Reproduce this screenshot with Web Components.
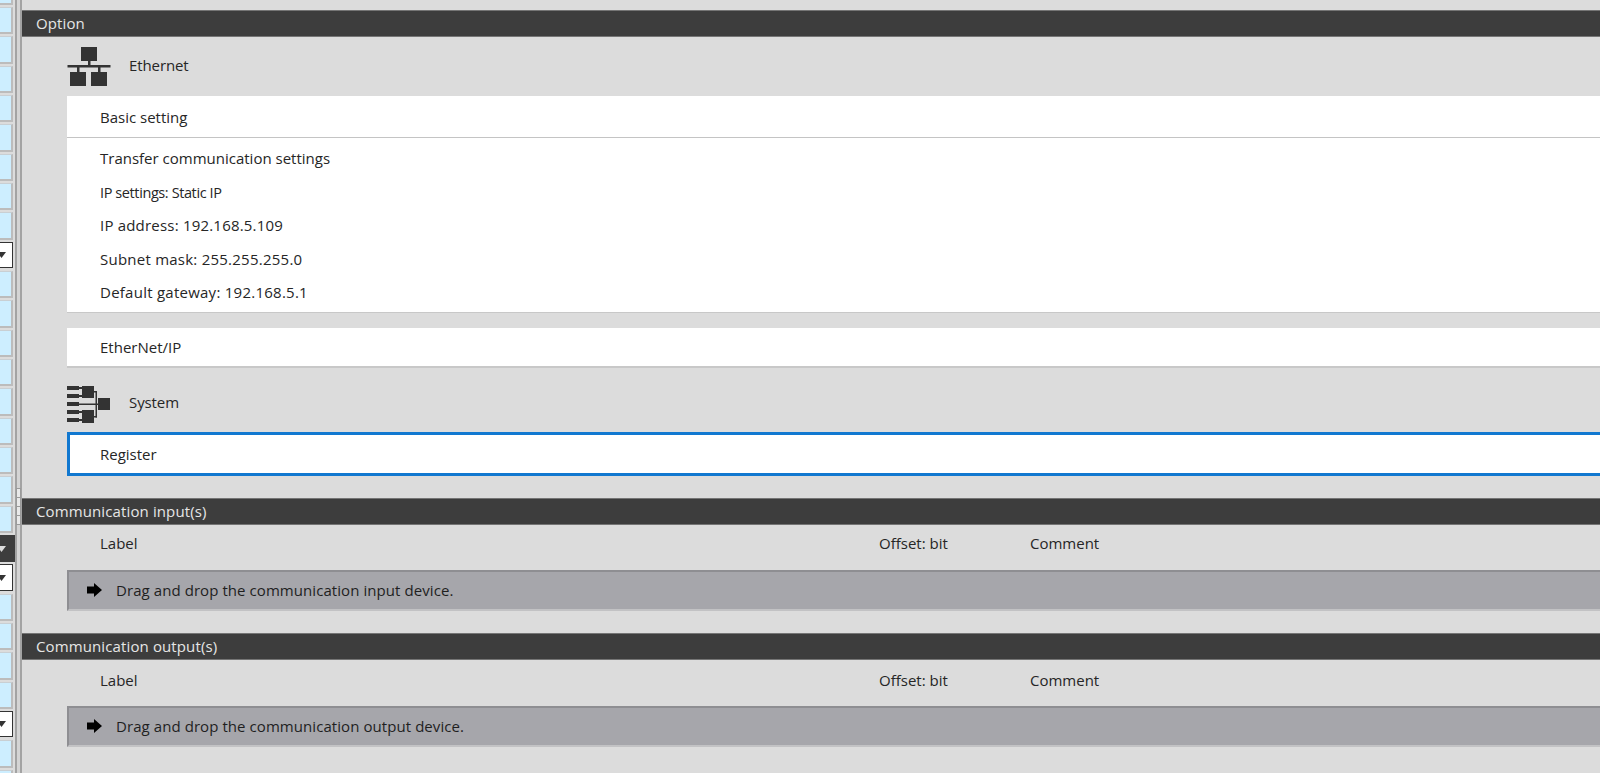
<!DOCTYPE html>
<html>
<head>
<meta charset="utf-8">
<title>Option</title>
<style>
  html, body { margin: 0; height: 100%; overflow: hidden; background: #dcdcdc; }
  body {
    display: flex;
    font: 15px "Open Sans", "Noto Sans", sans-serif;
    color: #262626;
  }
  .grow { flex: 1; min-width: 0; padding-top: 10px; }
</style>
</head>
<body>
<side-strip></side-strip>
<pane-splitter></pane-splitter>
<div class="grow">
  <section-bar>Option</section-bar>

  <group-head>
    <svg slot="icon" width="44" height="40" viewBox="0 0 44 40" fill="#333">
      <rect x="14" y="0" width="16" height="14"/>
      <rect x="21" y="14" width="2.5" height="5"/>
      <rect x="0.5" y="18" width="43" height="2.5"/>
      <rect x="10" y="20" width="2.5" height="5"/>
      <rect x="31" y="20" width="2.5" height="5"/>
      <rect x="3" y="25" width="16" height="14"/>
      <rect x="24" y="25" width="16" height="14"/>
    </svg>
    Ethernet
  </group-head>
  <white-row>Basic setting</white-row>
  <detail-card>
    <div>Transfer communication settings</div>
    <div style="font-size:14.5px;letter-spacing:-.4px">IP settings: Static IP</div>
    <div style="letter-spacing:.2px">IP address: 192.168.5.109</div>
    <div style="letter-spacing:.24px">Subnet mask: 255.255.255.0</div>
    <div style="letter-spacing:.25px">Default gateway: 192.168.5.1</div>
  </detail-card>
  <white-row gap>EtherNet/IP</white-row>

  <group-head tall>
    <svg slot="icon" width="44" height="38" viewBox="0 0 44 38" fill="#333">
      <rect x="0" y="1" width="12" height="4"/>
      <rect x="0" y="9" width="12" height="4"/>
      <rect x="0" y="17" width="12" height="4"/>
      <rect x="0" y="25" width="12" height="4"/>
      <rect x="0" y="33" width="12" height="4"/>
      <rect x="12" y="2" width="3" height="2"/>
      <rect x="12" y="10" width="3" height="2"/>
      <rect x="12" y="26" width="3" height="2"/>
      <rect x="12" y="34" width="3" height="2"/>
      <rect x="15" y="1" width="12" height="12"/>
      <rect x="15" y="25" width="12" height="13"/>
      <rect x="31" y="13" width="12" height="12"/>
      <rect x="12" y="18.5" width="19" height="1.5"/>
      <rect x="27" y="6" width="3" height="1.5"/>
      <rect x="27" y="31" width="3" height="1.5"/>
      <rect x="28.5" y="6" width="1.5" height="26.5"/>
    </svg>
    System
  </group-head>
  <white-row selected>Register</white-row>

  <section-bar spaced>Communication input(s)</section-bar>
  <col-head></col-head>
  <drop-zone>Drag and drop the communication input device.</drop-zone>

  <section-bar spaced>Communication output(s)</section-bar>
  <col-head tall></col-head>
  <drop-zone>Drag and drop the communication output device.</drop-zone>
</div>

<script>
  // left list, cut off by the window edge: only the right end of each cell shows
  class SideStrip extends HTMLElement {
    constructor() {
      super();
      const shadowRoot = this.attachShadow({ mode: 'open' });
      const kinds = {
        8: 'drop', 18: 'dark', 19: 'drop', 24: 'drop'
      };
      let cells = '';
      for (let i = -1; i < 27; i++) {
        const kind = kinds[i] || '';
        const caret = kind ? '<svg width="9" height="6" viewBox="0 0 9 6"><path d="M0 0h9L4.5 6z" fill="' + (kind == 'dark' ? '#ddd' : '#333') + '"/></svg>' : '';
        cells += '<div class="cell ' + kind + '">' + caret + '</div>';
      }
      shadowRoot.innerHTML = `
        <style>
          :host { display: block; width: 15px; flex: none; overflow: hidden; height: 773px; }
          .list { margin-top: -22.3px; }
          .cell {
            box-sizing: border-box;
            width: 13px;
            height: 27.33px;
            margin-bottom: 2px;
            background: #cdeeff;
            border: 1px solid #c9cfd3;
            border-bottom: 2px solid #bcbcbc;
            border-left: 0;
            border-right: 2px solid #bcbcbc;
            display: flex;
            align-items: center;
            overflow: hidden;
          }
          .cell svg { flex: none; margin-left: -3px; }
          .drop {
            width: 12.5px;
            height: 26.5px;
            margin: 0 0 2.83px;
            background: #fff;
            border: 1px solid #333;
            border-left: 0;
          }
          .dark {
            width: 15px;
            background: #3d3d3d;
            border: 0;
          }
        </style>
        <div class="list">${cells}</div>
      `;
    }
  }
  customElements.define('side-strip', SideStrip);

  class PaneSplitter extends HTMLElement {
    constructor() {
      super();
      const shadowRoot = this.attachShadow({ mode: 'open' });
      shadowRoot.innerHTML = `
        <style>
          :host {
            display: block;
            flex: none;
            box-sizing: border-box;
            width: 7px;
            height: 773px;
            background: #d4d4d4;
            border-left: 2px solid #a3a3a3;
            border-right: 2px solid #a3a3a3;
            padding-top: 488px;
          }
          .grip {
            box-sizing: border-box;
            width: 5px;
            margin-left: -1px;
            height: 10px;
            background: #e9e9e9;
            border: 1px solid #9a9a9a;
            margin-bottom: -1px;
          }
        </style>
        <div class="grip"></div><div class="grip"></div><div class="grip"></div><div class="grip"></div>
      `;
    }
  }
  customElements.define('pane-splitter', PaneSplitter);

  class SectionBar extends HTMLElement {
    constructor() {
      super();
      const shadowRoot = this.attachShadow({ mode: 'open' });
      shadowRoot.innerHTML = `
        <style>
          :host {
            display: flex;
            align-items: center;
            box-sizing: border-box;
            height: 27px;
            padding: 0 0 2px 14px;
            background: #3d3d3d;
            border-top: 1px solid #757575;
            border-bottom: 1px solid #757575;
            color: #e6e6e6;
            letter-spacing: .12px;
          }
          :host([spaced]) { margin-top: 22px; }
        </style>
        <slot></slot>
      `;
    }
  }
  customElements.define('section-bar', SectionBar);

  class GroupHead extends HTMLElement {
    constructor() {
      super();
      const shadowRoot = this.attachShadow({ mode: 'open' });
      shadowRoot.innerHTML = `
        <style>
          :host {
            display: flex;
            align-items: center;
            box-sizing: border-box;
            height: 59px;
            padding-left: 45px;
          }
          :host([tall]) { height: 64px; padding-top: 8px; }
          .icon { width: 44px; margin-right: 18px; display: flex; }
          .label { margin-top: -3px; letter-spacing: -.1px; }
          :host([tall]) .label { margin-top: -4px; }
        </style>
        <div class="icon"><slot name="icon"></slot></div>
        <div class="label"><slot></slot></div>
      `;
    }
  }
  customElements.define('group-head', GroupHead);

  class WhiteRow extends HTMLElement {
    constructor() {
      super();
      const shadowRoot = this.attachShadow({ mode: 'open' });
      shadowRoot.innerHTML = `
        <style>
          :host {
            display: flex;
            align-items: center;
            box-sizing: border-box;
            height: 42px;
            margin-left: 45px;
            padding-left: 33px;
            background: #fff;
            border-bottom: 1px solid #c4c4c4;
          }
          :host([gap]) { height: 40px; margin-top: 15px; border-bottom: 2px solid #c8c8c8; }
          :host([selected]) {
            height: 44px;
            padding-left: 30px;
            border: 3px solid #1178d0;
            border-right: 0;
          }
        </style>
        <slot></slot>
      `;
    }
  }
  customElements.define('white-row', WhiteRow);

  class DetailCard extends HTMLElement {
    constructor() {
      super();
      const shadowRoot = this.attachShadow({ mode: 'open' });
      shadowRoot.innerHTML = `
        <style>
          :host {
            display: block;
            box-sizing: border-box;
            height: 175px;
            margin-left: 45px;
            padding: 4px 0 0 33px;
            background: #fff;
            border-bottom: 1px solid #c8c8c8;
          }
          ::slotted(div) { height: 33.5px; line-height: 33.5px; }
        </style>
        <slot></slot>
      `;
    }
  }
  customElements.define('detail-card', DetailCard);

  class ColHead extends HTMLElement {
    constructor() {
      super();
      const shadowRoot = this.attachShadow({ mode: 'open' });
      shadowRoot.innerHTML = `
        <style>
          :host {
            display: grid;
            grid-template-columns: 779px 151px 1fr;
            align-items: center;
            box-sizing: border-box;
            height: 45px;
            padding: 0 0 9px 78px;
          }
          :host([tall]) { height: 46px; padding-bottom: 7px; }
        </style>
        <div>Label</div><div>Offset: bit</div><div>Comment</div>
      `;
    }
  }
  customElements.define('col-head', ColHead);

  class DropZone extends HTMLElement {
    constructor() {
      super();
      const shadowRoot = this.attachShadow({ mode: 'open' });
      shadowRoot.innerHTML = `
        <style>
          :host {
            display: flex;
            align-items: center;
            box-sizing: border-box;
            height: 41px;
            margin-left: 45px;
            padding: 0 0 1px 18px;
            background: #a6a6ab;
            border-top: 2px solid #8e8e92;
            border-left: 2px solid #8e8e92;
            border-bottom: 2px solid #c2c2c4;
            color: #1f1f1f;
            letter-spacing: .07px;
          }
          svg { margin-right: 14px; flex: none; }
        </style>
        <svg width="15" height="14" viewBox="0 0 15 14"><path d="M0 3.5h7V0l8 7-8 7v-3.5H0z" fill="#000"/></svg>
        <slot></slot>
      `;
    }
  }
  customElements.define('drop-zone', DropZone);
</script>
</body>
</html>
